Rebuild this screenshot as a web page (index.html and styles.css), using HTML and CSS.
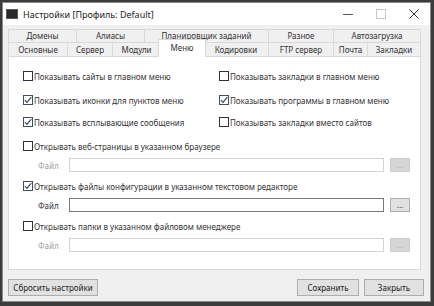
FILE: index.html
```html
<!DOCTYPE html>
<html lang="ru">
<head>
    <meta charset="UTF-8">
    <title>Настройки [Профиль: Default]</title>
    <link rel="stylesheet" href="styles.css">
</head>
<body>
    <div class="window">
        <div class="titlebar">
            <span class="app-icon"></span>
            <span class="title">Настройки [Профиль: Default]</span>
            <div class="controls">
                <span class="ctl">
                    <svg width="10" height="10" viewBox="0 0 10 10"><line x1="0" y1="5.5" x2="10" y2="5.5" stroke="#555" stroke-width="1"/></svg>
                </span>
                <span class="ctl">
                    <svg width="10" height="10" viewBox="0 0 10 10"><rect x="0.5" y="0.5" width="9" height="9" fill="none" stroke="#c8c8c8" stroke-width="1"/></svg>
                </span>
                <span class="ctl">
                    <svg width="10" height="10" viewBox="0 0 10 10"><path d="M0.5 0.5 L9.5 9.5 M9.5 0.5 L0.5 9.5" stroke="#333" stroke-width="1"/></svg>
                </span>
            </div>
        </div>

        <div class="content">
            <div class="tabs">
                <div class="tab-row row-back">
                    <div class="tab">Домены</div>
                    <div class="tab">Алиасы</div>
                    <div class="tab">Планировщик заданий</div>
                    <div class="tab">Разное</div>
                    <div class="tab">Автозагрузка</div>
                </div>
                <div class="tab-row row-front">
                    <div class="tab">Основные</div>
                    <div class="tab">Сервер</div>
                    <div class="tab">Модули</div>
                    <div class="tab active">Меню</div>
                    <div class="tab">Кодировки</div>
                    <div class="tab">FTP сервер</div>
                    <div class="tab">Почта</div>
                    <div class="tab">Закладки</div>
                </div>
            </div>

            <div class="panel">
                <div class="options">
                    <label class="check"><span class="box"></span>Показывать сайты в главном меню</label>
                    <label class="check"><span class="box"></span>Показывать закладки в главном меню</label>
                    <label class="check"><span class="box checked"><svg width="8" height="8" viewBox="0 0 8 8"><path d="M0.8 4.2 L3 6.4 L7.3 1.2" fill="none" stroke="#3a4a5c" stroke-width="1.2"/></svg></span>Показывать иконки для пунктов меню</label>
                    <label class="check"><span class="box checked"><svg width="8" height="8" viewBox="0 0 8 8"><path d="M0.8 4.2 L3 6.4 L7.3 1.2" fill="none" stroke="#3a4a5c" stroke-width="1.2"/></svg></span>Показывать программы в главном меню</label>
                    <label class="check"><span class="box checked"><svg width="8" height="8" viewBox="0 0 8 8"><path d="M0.8 4.2 L3 6.4 L7.3 1.2" fill="none" stroke="#3a4a5c" stroke-width="1.2"/></svg></span>Показывать всплывающие сообщения</label>
                    <label class="check"><span class="box"></span>Показывать закладки вместо сайтов</label>
                </div>

                <div class="group">
                    <label class="check"><span class="box"></span>Открывать веб-страницы в указанном браузере</label>
                    <div class="file-row disabled">
                        <span class="file-label">Файл</span>
                        <span class="file-input"></span>
                        <span class="browse">...</span>
                    </div>
                </div>

                <div class="group">
                    <label class="check"><span class="box checked"><svg width="8" height="8" viewBox="0 0 8 8"><path d="M0.8 4.2 L3 6.4 L7.3 1.2" fill="none" stroke="#3a4a5c" stroke-width="1.2"/></svg></span>Открывать файлы конфигурации в указанном текстовом редакторе</label>
                    <div class="file-row">
                        <span class="file-label">Файл</span>
                        <span class="file-input"></span>
                        <span class="browse">...</span>
                    </div>
                </div>

                <div class="group">
                    <label class="check"><span class="box"></span>Открывать папки в указанном файловом менеджере</label>
                    <div class="file-row disabled">
                        <span class="file-label">Файл</span>
                        <span class="file-input"></span>
                        <span class="browse">...</span>
                    </div>
                </div>
            </div>

            <div class="footer">
                <button class="btn reset">Сбросить настройки</button>
                <div class="footer-right">
                    <button class="btn save">Сохранить</button>
                    <button class="btn close">Закрыть</button>
                </div>
            </div>
        </div>
    </div>
</body>
</html>
```

FILE: styles.css
```css
* {
    box-sizing: border-box;
}

body {
    margin: 0;
    background-color: #3b3b3b;
    font-family: "Noto Sans", "DejaVu Sans", sans-serif;
    color: #333;
}

.window {
    width: 429px;
    height: 300px;
    margin: 2px 0 0 2px;
    background-color: #f0f0f0;
    border: 1px solid #8a8a8a;
}

.titlebar {
    height: 22px;
    background-color: #fff;
    display: flex;
    align-items: center;
    padding-left: 3px;
}

.app-icon {
    width: 12px;
    height: 10px;
    background-color: #2a2a2a;
    border: 1px solid #555;
    margin-right: 5px;
}

.title {
    font-size: 9px;
    color: #222;
}

.controls {
    margin-left: auto;
    display: flex;
    height: 100%;
}

.ctl {
    width: 33px;
    display: flex;
    align-items: center;
    justify-content: center;
}

.content {
    padding: 4px 9px 0 5px;
}

.tab-row {
    display: grid;
    font-size: 8px;
    color: #333;
}

.row-back {
    grid-template-columns: 69px 68px 124px 65px 87px;
    height: 13px;
}

.row-front {
    grid-template-columns: 60px 45px 48px 43px 65px 65px 34px 53px;
    height: 14px;
}

.tab {
    background-color: #f0f0f0;
    border: 1px solid #d9d9d9;
    border-bottom: none;
    margin-left: -1px;
    display: flex;
    align-items: center;
    justify-content: center;
    white-space: nowrap;
    line-height: 1;
}

.tab:first-child {
    margin-left: 0;
}

.tab.active {
    background-color: #fff;
    margin: -3px -2px -1px -3px;
    position: relative;
    z-index: 1;
    padding-bottom: 1px;
}

.panel {
    height: 214px;
    background-color: #fff;
    border: 1px solid #d9d9d9;
    padding: 13px 10px 0 14px;
    font-size: 8px;
}

.options {
    display: grid;
    grid-template-columns: 196px 1fr;
    row-gap: 10px;
    margin-bottom: 12px;
}

.options .check:nth-child(1),
.options .check:nth-child(2) {
    margin-bottom: 2px;
}

.check {
    display: flex;
    align-items: center;
    height: 12px;
    white-space: nowrap;
    color: #333;
}

.box {
    width: 10px;
    height: 10px;
    border: 1px solid #333;
    background-color: #fff;
    margin-right: 1px;
    display: flex;
    align-items: center;
    justify-content: center;
    flex-shrink: 0;
}

.box.checked {
    border-color: #3f4f61;
}

.group {
    margin-bottom: 8px;
}

.file-row {
    display: flex;
    align-items: center;
    margin-top: 6px;
    height: 14px;
}

.file-label {
    width: 31px;
    margin-left: 15px;
    color: #333;
}

.file-input {
    width: 315px;
    height: 14px;
    border: 1px solid #7a7a7a;
    background-color: #fff;
}

.browse {
    width: 20px;
    height: 14px;
    margin-left: 6px;
    border: 1px solid #adadad;
    background-color: #e1e1e1;
    display: flex;
    align-items: center;
    justify-content: center;
    font-size: 8px;
    color: #333;
    line-height: 1;
}

.disabled .file-label {
    color: #a0a0a0;
}

.disabled .file-input {
    border-color: #d4d4d4;
}

.disabled .browse {
    border-color: #cdcdcd;
    background-color: #d6d6d6;
    color: #a8a8a8;
}

.footer {
    display: flex;
    justify-content: space-between;
    margin-top: 9px;
    margin-right: -3px;
}

.footer-right {
    display: flex;
    gap: 5px;
}

.btn {
    height: 17px;
    padding: 0;
    border: 1px solid #adadad;
    background-color: #e1e1e1;
    font-family: "Noto Sans", "DejaVu Sans", sans-serif;
    font-size: 8px;
    color: #222;
    line-height: 1;
}

.btn.reset {
    width: 90px;
}

.btn.save {
    width: 62px;
}

.btn.close {
    width: 60px;
}
```
